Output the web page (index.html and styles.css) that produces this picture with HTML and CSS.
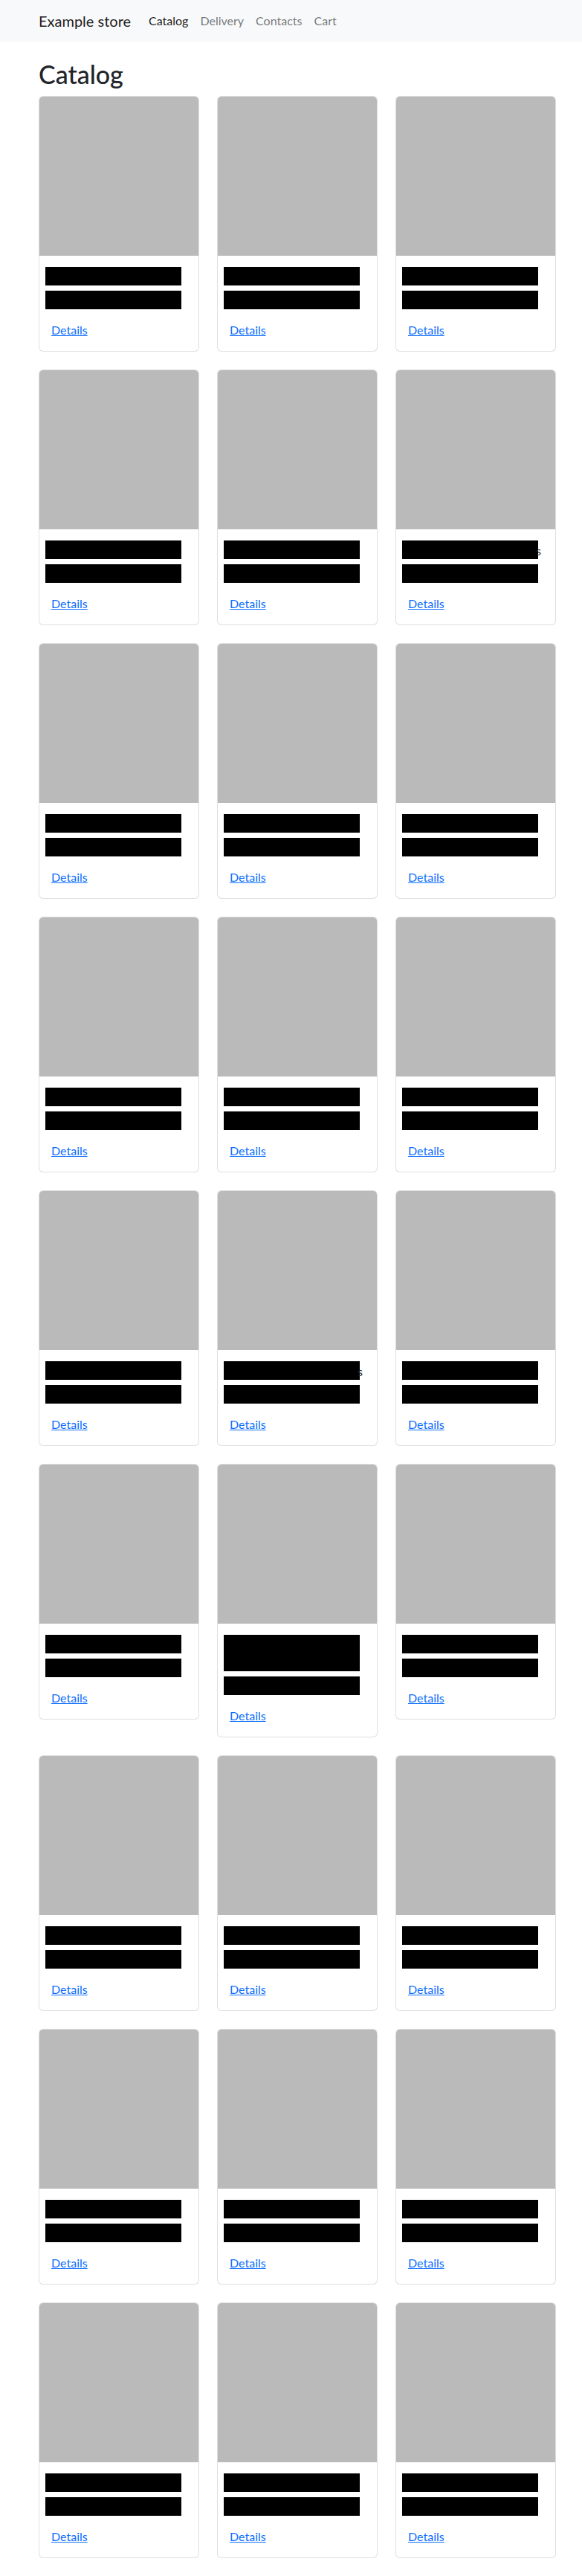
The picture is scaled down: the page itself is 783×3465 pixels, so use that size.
FILE: index.html
```html
<!DOCTYPE html>
<html lang="en">
<head>
    <meta charset="UTF-8">
    <meta name="viewport" content="width=device-width, initial-scale=1.0">
    <title>Example store</title>
    <link rel="stylesheet" href="styles.css">
</head>
<body>
    <nav class="navbar">
        <div class="container">
            <a class="brand" href="#">Example store</a>
            <ul class="nav">
                <li><a class="active" href="#">Catalog</a></li>
                <li><a href="#">Delivery</a></li>
                <li><a href="#">Contacts</a></li>
                <li><a href="#">Cart</a></li>
            </ul>
        </div>
    </nav>

    <main class="container">
        <h1>Catalog</h1>
        <div class="catalog" id="catalog"></div>
    </main>

    <script>
        let catalog = document.getElementById('catalog');

        // 27 products, a few have longer titles
        let products = [];
        for (let i = 0; i < 27; i++) {
            products.push({ tall: false, tail: '' });
        }
        products[5].tail = 's';
        products[13].tail = 's';
        products[16].tall = true;

        products.forEach(function (p) {
            let card = document.createElement('div');
            card.className = 'card';
            card.innerHTML =
                '<div class="card-img"></div>' +
                '<div class="card-body">' +
                    '<div class="title"><div class="bar' + (p.tall ? ' bar-tall' : '') + '"></div>' +
                    (p.tail ? '<span class="tail">' + p.tail + '</span>' : '') + '</div>' +
                    '<div class="bar bar-second"></div>' +
                    '<p class="more"><a href="#">Details</a></p>' +
                '</div>';
            catalog.appendChild(card);
        });
    </script>
</body>
</html>
```
FILE: styles.css
```css
body {
    margin: 0;
    font-family: Lato, "Open Sans", sans-serif;
    font-size: 16px;
    line-height: 1.5;
    color: #212529;
    background-color: #fff;
}

.container {
    width: 696px;
    margin-left: 52px;
}

.navbar {
    background-color: #f8f9fa;
    padding: 8px 0;
}

.navbar .container {
    display: flex;
    align-items: center;
}

.brand {
    font-size: 20px;
    line-height: 30px;
    padding: 5px 0;
    margin-right: 16px;
    color: rgba(0,0,0,0.9);
    text-decoration: none;
}

.nav {
    display: flex;
    list-style: none;
    margin: 0;
    padding: 0;
}

.nav a {
    display: block;
    padding: 8px;
    color: rgba(0,0,0,0.55);
    text-decoration: none;
}

.nav a.active {
    color: rgba(0,0,0,0.9);
}

h1 {
    margin: 24px 0 8px;
    font-size: 34px;
    font-weight: 500;
    line-height: 1.2;
}

.catalog {
    display: grid;
    grid-template-columns: repeat(3, 1fr);
    column-gap: 24px;
    align-items: start;
}

.card {
    border: 1px solid rgba(0,0,0,0.125);
    border-radius: 6px;
    overflow: hidden;
    margin-bottom: 24px;
    background-color: #fff;
}

.card-img {
    height: 214px;
    background-color: #bababa;
}

.card-body {
    padding: 16px;
}

.title {
    display: flex;
    align-items: flex-end;
    margin-top: -1px;
}

.bar {
    background-color: #000;
    width: 183px;
    height: 25px;
    margin-left: -8px;
    flex-shrink: 0;
}

.bar-tall {
    height: 49px;
}

.bar-second {
    margin-top: 7px;
}

.tail {
    font-size: 16px;
    line-height: 22px;
    margin-left: -3px;
    color: #212529;
}

.more {
    margin: 16px 0 0;
}

.more a {
    color: #0d6efd;
}
```
